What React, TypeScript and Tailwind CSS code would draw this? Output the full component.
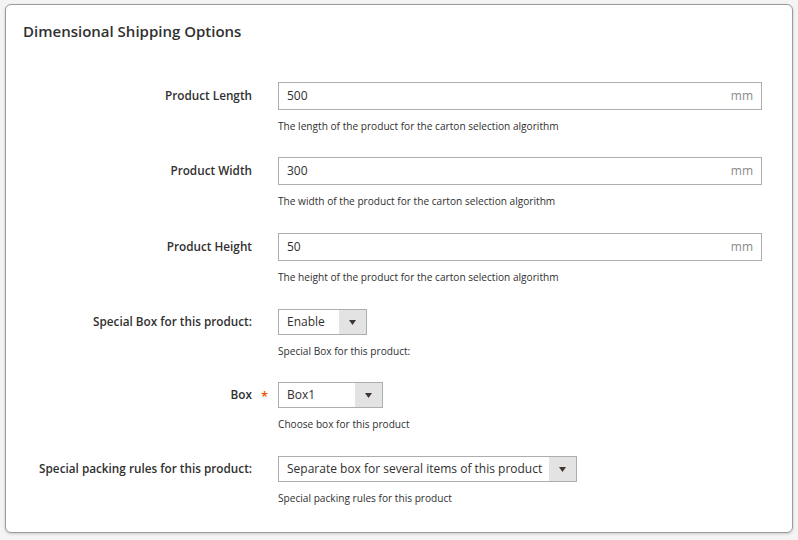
import React from "react";

const font = { fontFamily: '"Open Sans", "Liberation Sans", sans-serif' };

interface FieldRowProps {
  label: string;
  required?: boolean;
  help: string;
  gap?: string;
  children: React.ReactNode;
}

const FieldRow = ({ label, required, help, gap = "mb-[25px]", children }: FieldRowProps) => (
  <div className={`flex items-start ${gap}`}>
    <div className="w-[246px] shrink-0 flex justify-end items-center h-[var(--h)] relative">
      <span className="text-[11.75px] font-semibold text-[#303030] leading-none">{label}</span>
      {required && (
        <span className="absolute -right-[16px] text-[13px] font-semibold text-[#eb5202] leading-none top-1/2 -translate-y-[35%]">*</span>
      )}
    </div>
    <div className="ml-[26px] flex-1 flex flex-col items-start">
      {children}
      <p className="mt-[9px] text-[10.15px] leading-[14px] text-[#303030]">{help}</p>
    </div>
  </div>
);

const UnitInput = ({ value }: { value: string }) => (
  <div className="w-full h-[28px] border border-[#adadad] bg-white flex items-center justify-between px-[8px]">
    <span className="text-[12px] text-[#303030]">{value}</span>
    <span className="text-[12px] text-[#8a8a8a]">mm</span>
  </div>
);

const SelectBox = ({ value, width }: { value: string; width: string }) => (
  <div className={`${width} h-[26px] border border-[#adadad] bg-white flex items-stretch`}>
    <span className="flex-1 flex items-center pl-[8px] text-[12px] text-[#303030] whitespace-nowrap">{value}</span>
    <span className="w-[27px] bg-[#e3e3e3] flex items-center justify-center">
      <svg width="7" height="5" viewBox="0 0 7 5">
        <path d="M0 0h7L3.5 5z" fill="#41362f" />
      </svg>
    </span>
  </div>
);

export default function App() {
  return (
    <div className="w-[798px] h-[540px] bg-[#f4f4f4] pt-[4px] pl-[5px]" style={font}>
      <div className="w-[788px] h-[529px] bg-white border border-[#9b9b9b] rounded-[6px] shadow-[0_1px_3px_rgba(0,0,0,0.18)] pt-[16px] pr-[30px]">
        <h2 className="pl-[17px] text-[15px] leading-[20px] font-semibold text-[#303030] mb-[41px]">
          Dimensional Shipping Options
        </h2>
        <div className="[--h:28px]">
          <FieldRow label="Product Length" gap="mb-[24px]" help="The length of the product for the carton selection algorithm">
            <UnitInput value="500" />
          </FieldRow>
          <FieldRow label="Product Width" help="The width of the product for the carton selection algorithm">
            <UnitInput value="300" />
          </FieldRow>
          <FieldRow label="Product Height" help="The height of the product for the carton selection algorithm">
            <UnitInput value="50" />
          </FieldRow>
        </div>
        <div className="[--h:26px]">
          <FieldRow label="Special Box for this product:" gap="mb-[24px]" help="Special Box for this product:">
            <SelectBox value="Enable" width="w-[89px]" />
          </FieldRow>
          <FieldRow label="Box" required help="Choose box for this product">
            <SelectBox value="Box1" width="w-[105px]" />
          </FieldRow>
          <FieldRow label="Special packing rules for this product:" gap="mb-0" help="Special packing rules for this product">
            <SelectBox value="Separate box for several items of this product" width="w-[299px]" />
          </FieldRow>
        </div>
      </div>
    </div>
  );
}
